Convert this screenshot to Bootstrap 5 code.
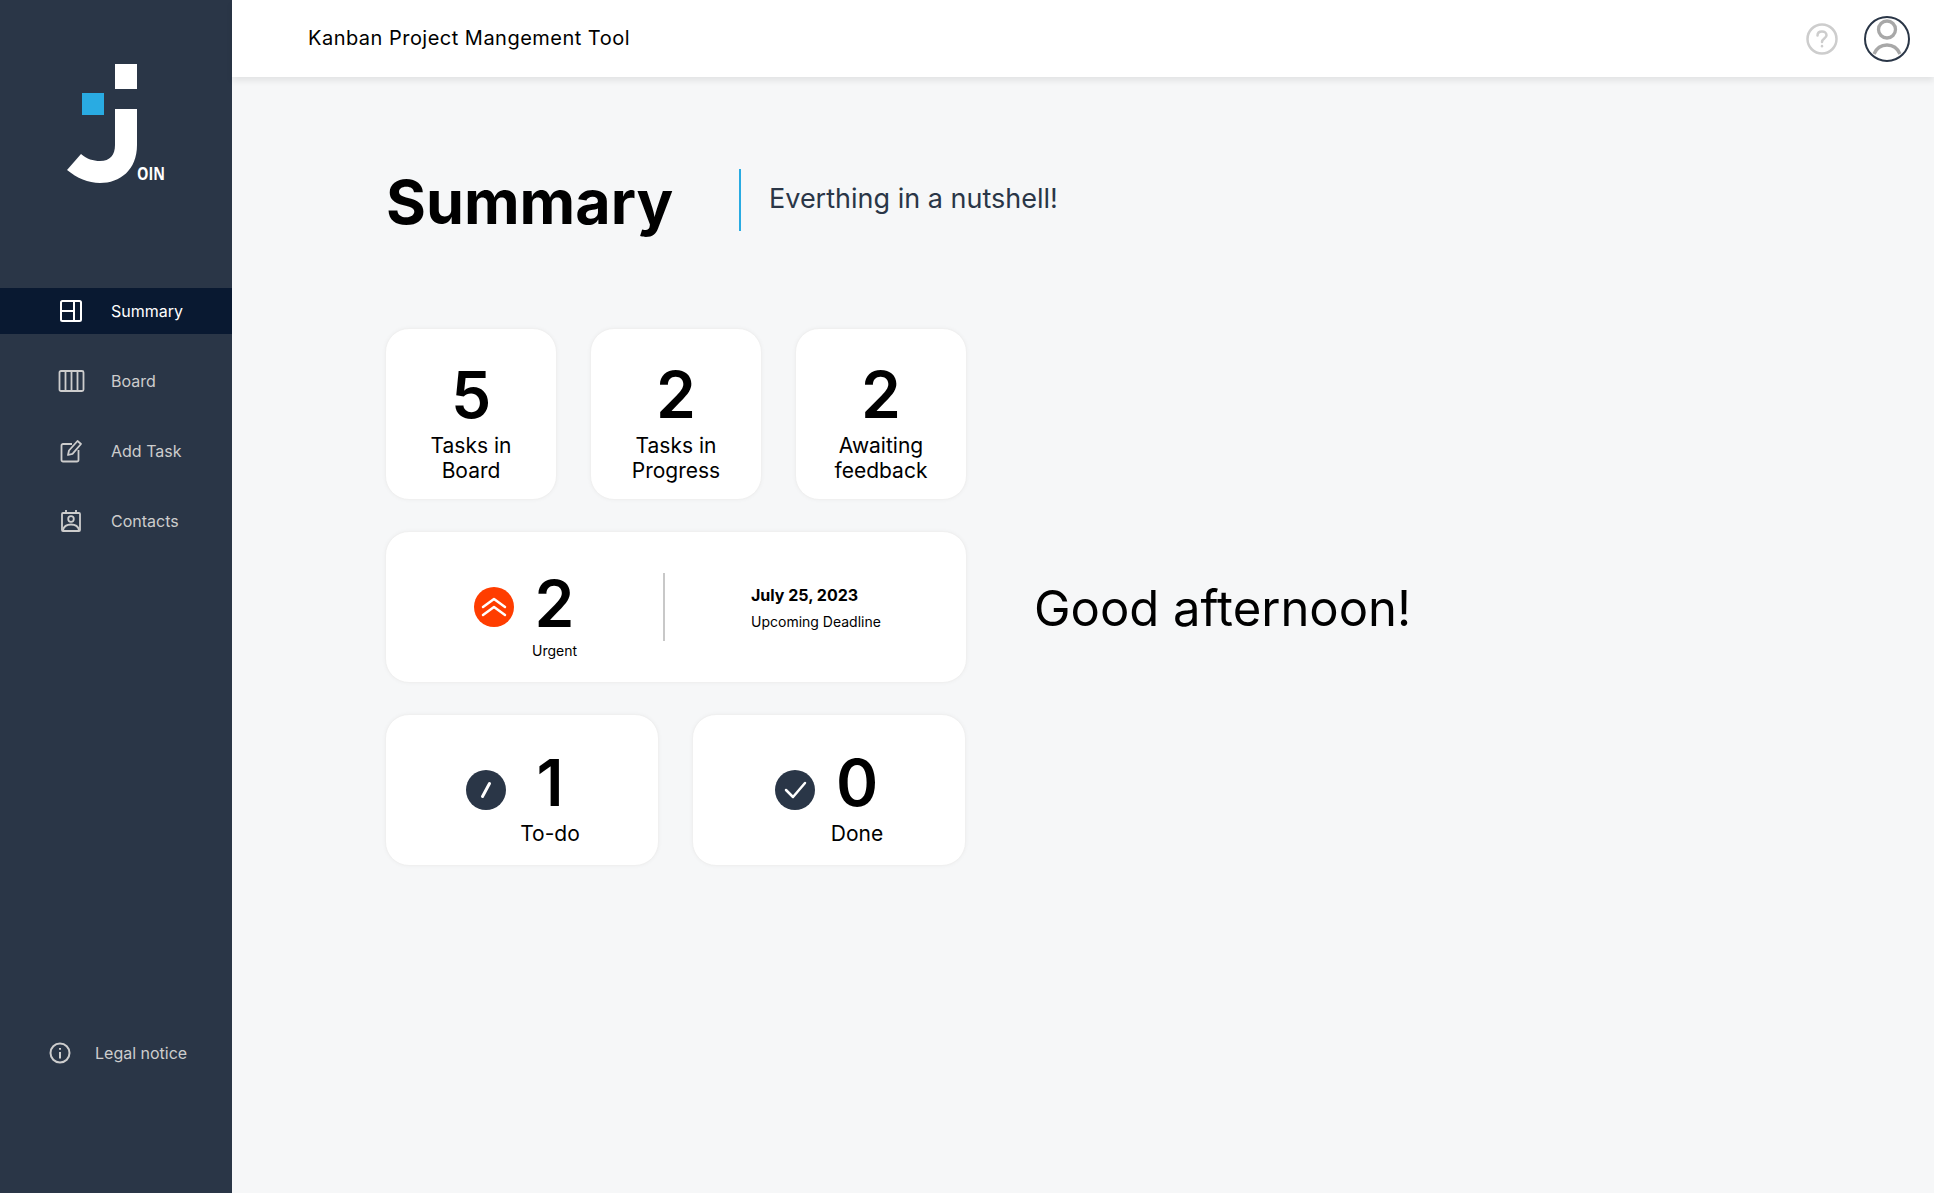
<!DOCTYPE html>
<html lang="en">
<head>
  <meta charset="UTF-8" />
  <meta name="viewport" content="width=device-width, initial-scale=1" />
  <title>Join - Summary</title>
  <link href="https://cdn.jsdelivr.net/npm/bootstrap@5.3.0/dist/css/bootstrap.min.css" rel="stylesheet" />
  <style>
    body {
      background-color: #f6f7f8;
      font-family: Inter, 'Liberation Sans', sans-serif;
      color: #000;
    }
    .app-shell { min-height: 100vh; }
    .side-menu {
      width: 232px;
      background-color: #2a3647;
      flex-shrink: 0;
    }
    .logo-box { height: 288px; padding: 60px 0 0 60px; }
    .logo-box svg { display: block; }
    .logo-text { font-family: 'Open Sans', sans-serif; font-weight: 700; font-size: 17px; }
    .side-nav { gap: 24px; }
    .side-nav .nav-link {
      height: 46px;
      padding: 0 0 0 55px;
      color: #cdcdcd;
      font-size: 16px;
      gap: 24px;
      border-radius: 0;
    }
    .side-nav .nav-link.active { background-color: #091931; color: #fff; }
    .side-nav svg { width: 32px; height: 32px; flex-shrink: 0; }
    .legal-link {
      color: #cdcdcd;
      font-size: 16px;
      margin: auto 0 128px 48px;
      gap: 23px;
      text-decoration: none;
      height: 24px;
    }
    .top-bar {
      height: 77px;
      padding: 0 24px 0 76px;
      box-shadow: 0 4px 6px rgba(0, 0, 0, .08);
    }
    .top-title { font-size: 20px; letter-spacing: .48px; margin-top: -2px; }
    .top-icons { gap: 25px; }
    .board-area { padding: 92px 0 0 153px; }
    .page-head { height: 62px; margin: 0 0 97px 1px; }
    .page-title { font-size: 61px; font-weight: 700; line-height: 62px; width: 353px; margin: 3px 0 0; }
    .page-rule { width: 2px; height: 62px; background-color: #29abe2; }
    .page-sub { font-size: 27px; color: #2a3647; margin-left: 28px; margin-top: -2px; }
    .tile-grid {
      display: grid;
      grid-template-columns: 582px auto;
      row-gap: 31px;
      column-gap: 67px;
    }
    .tile {
      border: 1px solid #f0f0f0;
      border-radius: 24px;
      background-color: #fff;
      box-shadow: 0 0 4px rgba(0, 0, 0, .04);
    }
    .tile-row { gap: 33px; }
    .tile-square { width: 172px; height: 172px; padding-top: 36px; text-align: center; }
    .tile-num { font-size: 64px; font-weight: 600; line-height: 60px; }
    .tile-label { font-size: 21px; line-height: 25px; }
    .tile-square .tile-label { margin-top: 8px; }
    .tile-wide { height: 152px; }
    .urgent-left { width: 277px; padding: 42px 0 0 10px; height: 100%; }
    .urgent-rule { width: 2px; height: 68px; background-color: #c8c8c8; margin-top: 41px; }
    .urgent-right { padding: 51px 0 0 86px; }
    .urgent-note { font-size: 14px; line-height: 20px; margin-top: 7px; }
    .round-icon { width: 40px; height: 40px; flex-shrink: 0; margin-top: 17px; }
    .urgent-left .round-icon { margin-top: 13px; margin-right: 2px; }
    .date-strong { font-size: 16px; font-weight: 700; line-height: 24px; }
    .date-note { font-size: 14px; line-height: 20px; margin-top: 5px; }
    .tile-half { width: 274px; height: 152px; padding-top: 38px; gap: 16px; }
    .tile-half .tile-label { margin-top: 8px; }
    .half-row { gap: 33px; }
    .todo-tile { gap: 14px; padding-left: 2px; }
    .greeting {
      grid-column: 2;
      grid-row: 2;
      font-size: 49px;
      align-self: center;
      line-height: 56px;
      margin-top: 3px;
    }
    .cell-one { grid-column: 1; grid-row: 1; }
    .cell-two { grid-column: 1; grid-row: 2; }
    .cell-three { grid-column: 1; grid-row: 3; }
  </style>
</head>
<body>
  <div class="app-shell d-flex">
    <!-- sidebar -->
    <aside class="side-menu d-flex flex-column">
      <div class="logo-box">
        <svg width="110" height="125" viewBox="60 60 110 125">
          <rect x="115" y="64" width="22" height="25" fill="#fff" />
          <rect x="82" y="93" width="22" height="22" fill="#29abe2" />
          <path d="M115 109H137V145C137 170 120 183 100 183C88 183 77 178 67 170L81 154C87 159 93 161 100 161C110 161 115 155 115 145Z" fill="#fff" />
          <text class="logo-text" x="137" y="180" fill="#fff" textLength="28" lengthAdjust="spacingAndGlyphs">OIN</text>
        </svg>
      </div>
      <nav class="nav side-nav flex-column">
        <a class="nav-link active d-flex align-items-center" href="#">
          <svg viewBox="0 0 32 32" fill="none" stroke="#fff" stroke-width="2"><rect x="6" y="6" width="20" height="20" rx="1.5" /><path d="M19 6V26M6 16H19" /></svg>
          Summary
        </a>
        <a class="nav-link d-flex align-items-center" href="#">
          <svg viewBox="0 0 32 32" fill="none" stroke="#cdcdcd" stroke-width="1.800"><rect x="4.500" y="6" width="24" height="20" rx="1.5" /><path d="M10.500 6V26M16.500 6V26M22.500 6V26" /></svg>
          Board
        </a>
        <a class="nav-link d-flex align-items-center" href="#">
          <svg viewBox="0 0 32 32" fill="none" stroke="#cdcdcd" stroke-width="1.800" stroke-linejoin="round"><path d="M17 9H8A1.5 1.5 0 0 0 6.500 10.500V25A1.500 1.500 0 0 0 8 26.500H22A1.500 1.500 0 0 0 23.500 25V15" /><path d="M13 20L14 15.500L22.500 6L26 9L17.500 18.800Z" /></svg>
          Add Task
        </a>
        <a class="nav-link d-flex align-items-center" href="#">
          <svg viewBox="0 0 32 32" fill="none" stroke="#cdcdcd" stroke-width="1.800"><rect x="7" y="8" width="18" height="18" rx="1" /><path d="M11 5V8M21 5V8" /><circle cx="16" cy="14" r="2.800" /><path d="M8 25C9 20.500 12 19.500 16 19.500S23 20.500 24 25" /></svg>
          Contacts
        </a>
      </nav>
      <a class="legal-link d-flex align-items-center" href="#">
        <svg width="24" height="24" viewBox="0 0 24 24" fill="none" stroke="#cdcdcd" stroke-width="2"><circle cx="12" cy="12" r="9.500" /><path d="M12 11V17.500" /><path d="M12 7V8.800" /></svg>
        Legal notice
      </a>
    </aside>

    <div class="flex-grow-1 d-flex flex-column">
      <!-- top bar -->
      <header class="top-bar navbar bg-white d-flex align-items-center justify-content-between flex-nowrap">
        <span class="top-title">Kanban Project Mangement Tool</span>
        <div class="top-icons d-flex align-items-center">
          <svg width="34" height="34" viewBox="0 0 34 34" fill="none" stroke="#cdcdcd" stroke-width="2.500" stroke-linecap="round"><circle cx="17" cy="17" r="14.500" /><path d="M12.500 13.500C12.500 10.800 14.500 9.500 17 9.500S21.500 11 21.500 13.200C21.500 16.500 17 16.500 17 20" /><path d="M17 24V24.300" /></svg>
          <svg width="46" height="46" viewBox="0 0 46 46" fill="none"><circle cx="23" cy="23" r="22" stroke="#2a3647" stroke-width="2" /><circle cx="23" cy="13.500" r="8.500" stroke="#a8a8a8" stroke-width="3.300" /><path d="M10 38C13 31 18 29 23 29S33 31 36 38" stroke="#a8a8a8" stroke-width="3.300" /></svg>
        </div>
      </header>

      <!-- summary -->
      <main class="board-area">
        <div class="page-head d-flex align-items-center">
          <h1 class="page-title">Summary</h1>
          <div class="page-rule"></div>
          <div class="page-sub">Everthing in a nutshell!</div>
        </div>

        <div class="tile-grid">
          <div class="cell-one d-flex tile-row">
            <div class="tile tile-square">
              <div class="tile-num">5</div>
              <div class="tile-label">Tasks in<br />Board</div>
            </div>
            <div class="tile tile-square">
              <div class="tile-num">2</div>
              <div class="tile-label">Tasks in<br />Progress</div>
            </div>
            <div class="tile tile-square">
              <div class="tile-num">2</div>
              <div class="tile-label">Awaiting<br />feedback</div>
            </div>
          </div>

          <div class="cell-two tile tile-wide d-flex">
            <div class="urgent-left d-flex justify-content-center gap-2">
              <svg class="round-icon" viewBox="0 0 40 40"><circle cx="20" cy="20" r="20" fill="#ff3d00" /><path d="M9 20L20 12L31 20M9 28L20 20L31 28" fill="none" stroke="#fff" stroke-width="2.500" stroke-linecap="round" stroke-linejoin="round" /></svg>
              <div class="text-center px-2">
                <div class="tile-num">2</div>
                <div class="urgent-note">Urgent</div>
              </div>
            </div>
            <div class="urgent-rule"></div>
            <div class="urgent-right">
              <div class="date-strong">July 25, 2023</div>
              <div class="date-note">Upcoming Deadline</div>
            </div>
          </div>

          <div class="greeting">Good afternoon!</div>

          <div class="cell-three d-flex half-row">
            <div class="tile tile-half todo-tile d-flex justify-content-center">
              <svg class="round-icon" viewBox="0 0 40 40"><circle cx="20" cy="20" r="20" fill="#2a3647" /><path d="M16.500 26.500L23.500 13.500" fill="none" stroke="#fff" stroke-width="3" stroke-linecap="round" /></svg>
              <div class="text-center">
                <div class="tile-num">1</div>
                <div class="tile-label">To-do</div>
              </div>
            </div>
            <div class="tile tile-half d-flex justify-content-center">
              <svg class="round-icon" viewBox="0 0 40 40"><circle cx="20" cy="20" r="20" fill="#2a3647" /><path d="M11 20L18 27L30 13" fill="none" stroke="#fff" stroke-width="2.500" stroke-linecap="round" stroke-linejoin="round" /></svg>
              <div class="text-center">
                <div class="tile-num">0</div>
                <div class="tile-label">Done</div>
              </div>
            </div>
          </div>
        </div>
      </main>
    </div>
  </div>
  <script src="https://cdn.jsdelivr.net/npm/bootstrap@5.3.0/dist/js/bootstrap.bundle.min.js"></script>
</body>
</html>
